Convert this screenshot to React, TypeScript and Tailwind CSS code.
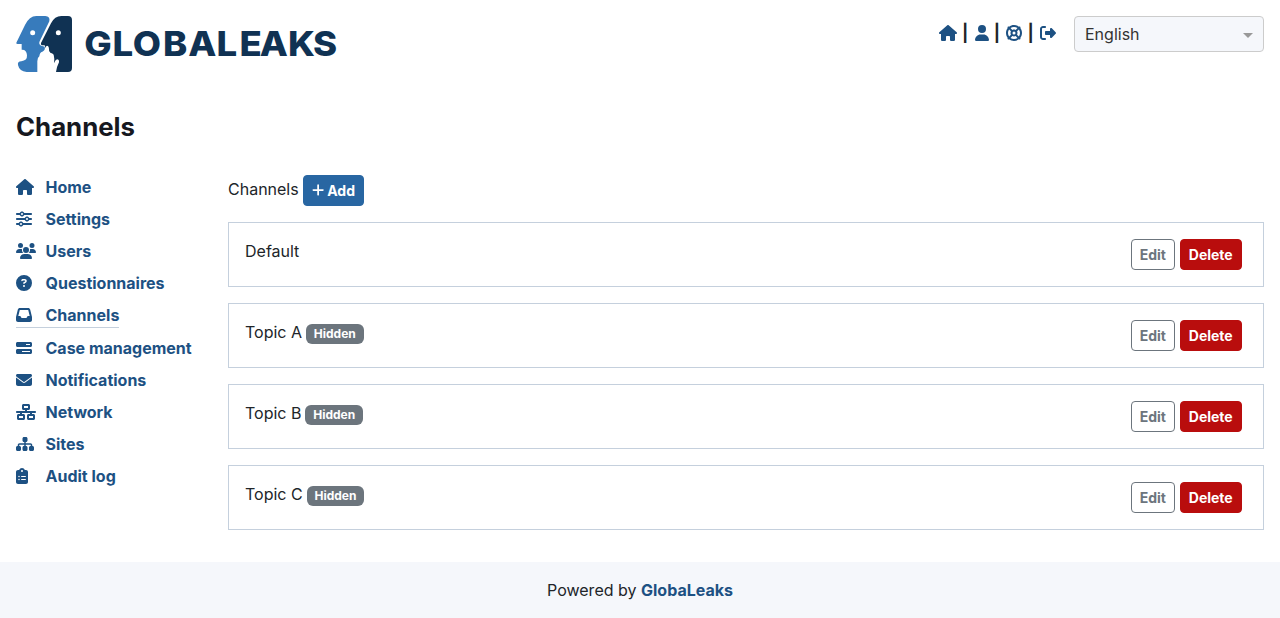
import type { ReactNode } from "react";
import type { IconType } from "react-icons";
import {
  FaHouse,
  FaUser,
  FaLifeRing,
  FaRightFromBracket,
  FaSliders,
  FaUsers,
  FaCircleQuestion,
  FaInbox,
  FaBarsProgress,
  FaEnvelope,
  FaNetworkWired,
  FaSitemap,
  FaClipboardList,
  FaPlus,
} from "react-icons/fa6";

type NavItem = { label: string; icon: IconType; width: string; active?: boolean };

const navItems: NavItem[] = [
  { label: "Home", icon: FaHouse, width: "w-[18px]" },
  { label: "Settings", icon: FaSliders, width: "w-4" },
  { label: "Users", icon: FaUsers, width: "w-5" },
  { label: "Questionnaires", icon: FaCircleQuestion, width: "w-4" },
  { label: "Channels", icon: FaInbox, width: "w-4", active: true },
  { label: "Case management", icon: FaBarsProgress, width: "w-4" },
  { label: "Notifications", icon: FaEnvelope, width: "w-4" },
  { label: "Network", icon: FaNetworkWired, width: "w-5" },
  { label: "Sites", icon: FaSitemap, width: "w-[18px]" },
  { label: "Audit log", icon: FaClipboardList, width: "w-3" },
];

const channels = [
  { name: "Default", hidden: false },
  { name: "Topic A", hidden: true },
  { name: "Topic B", hidden: true },
  { name: "Topic C", hidden: true },
];

function Logo() {
  return (
    <svg width="322" height="56" viewBox="0 0 322 56" role="img" aria-label="GlobaLeaks">
      <g transform="scale(0.33333) translate(-48 -48)">
        <path
          fill="#377bbc"
          d="M49 128 L75 75 Q88 48 109 48 H136 Q151 49 148 64 L119 124 Q115 134 124 137 L134 140 Q137 150 127 155 Q119 157 118 169 Q111 174 112 184 V216 H80 Q58 214 54 195 Q52 184 64 184 Q82 182 81 166 Q80 148 65 149 V132 H53 Q48 132 49 128 Z"
        />
        <path
          fill="#103253"
          d="M123 129 L153 70 Q164 48 184 48 H204 Q216 48 216 60 V204 Q216 216 204 216 H168 Q169 203 177 187 Q178 178 171 178 Q166 179 162 190 Q164 174 161 164 Q158 159 151 158 Q146 155 147 147 Q146 137 141 137 Q137 137 137 145 L134 136 H126 Q121 134 123 129 Z"
        />
        <circle cx="98" cy="98" r="7.5" fill="#fff" />
        <circle cx="175" cy="98" r="7.5" fill="#fff" />
      </g>
      <text
        transform="scale(1.06 1)"
        x="64.4 91 110.2 138.8 162.4 189.2 210.8 230 256.7 280.2"
        y="40"
        fill="#103253"
        className="font-[Inter] text-[34.5px] font-extrabold"
      >
        GLOBALEAKS
      </text>
    </svg>
  );
}

function Button({ className, children }: { className: string; children: ReactNode }) {
  return (
    <button
      type="button"
      className={`flex h-[31px] items-center rounded-[4px] border px-2 text-[14px] leading-[21px] font-bold ${className}`}
    >
      {children}
    </button>
  );
}

function Separator() {
  return <span className="w-[17.7px] pr-px text-center text-[17px] font-bold text-[#212529]">|</span>;
}

export default function App() {
  return (
    <div className="flex h-[618px] flex-col bg-white font-[Inter,sans-serif] text-[16px] leading-6 text-[#212529]">
      <header className="flex items-start justify-between px-4 pt-4">
        <Logo />
        <div className="flex items-start">
          <nav className="flex h-[34px] items-center text-[#1d5183]">
            <FaHouse className="h-4 w-[18px]" />
            <Separator />
            <FaUser className="h-4 w-[14px]" />
            <Separator />
            <FaLifeRing className="h-4 w-4" />
            <Separator />
            <FaRightFromBracket className="h-4 w-4" />
          </nav>
          <div className="ml-[18px] flex h-9 w-[190px] items-center justify-between rounded-[4px] border border-[#cccccc] bg-[#f5f7fb] pr-[10px] pl-[10px] text-[#333]">
            <span>English</span>
            <span className="mt-[3px] border-x-[5px] border-t-[5px] border-x-transparent border-t-[#999]" />
          </div>
        </div>
      </header>

      <h1 className="mt-[39px] px-4 text-[25.8px] leading-8 font-bold text-[#16181f]">Channels</h1>

      <div className="mt-7 flex flex-1 px-4">
        <ul className="w-[212px] shrink-0">
          {navItems.map(({ label, icon: Icon, width, active }) => (
            <li key={label} className="flex py-1">
              <a
                href="#"
                className={`flex items-center font-bold text-[#1d5183] ${active ? "border-b border-[#c5d0dd]" : ""}`}
              >
                <span className="flex w-[29.5px]">
                  <Icon className={`h-4 ${width}`} />
                </span>
                {label}
              </a>
            </li>
          ))}
        </ul>

        <main className="flex-1 pt-1">
          <div className="flex items-start gap-[4.3px]">
            <span className="mt-[2px]">Channels</span>
            <Button className="border-[#2866a2] bg-[#2866a2] text-white">
              <FaPlus className="mr-[3px] mb-px h-[14px] w-[12.25px]" />
              Add
            </Button>
          </div>
          <div className="mt-4 flex flex-col gap-4">
            {channels.map(({ name, hidden }) => (
              <section
                key={name}
                className="flex h-[65px] items-start justify-between border border-[#c5d0dd] py-4 pr-[21.3px] pl-4"
              >
                <div className="flex items-center gap-[4px]">
                  {name}
                  {hidden && (
                    <span className="mt-[3px] flex h-5 items-center rounded-[6px] bg-[#6c757d] px-[7.8px] text-[12px] leading-3 font-bold text-white">
                      Hidden
                    </span>
                  )}
                </div>
                <div className="flex gap-[4.8px]">
                  <Button className="border-[#6c757d] bg-white text-[#6c757d]">Edit</Button>
                  <Button className="border-[#b90d0d] bg-[#b90d0d] text-white">Delete</Button>
                </div>
              </section>
            ))}
          </div>
        </main>
      </div>

      <footer className="flex h-14 shrink-0 items-center justify-center bg-[#f5f7fb]">
        <p>
          Powered by{" "}
          <a href="#" className="font-bold text-[#1d5183]">
            GlobaLeaks
          </a>
        </p>
      </footer>
    </div>
  );
}
